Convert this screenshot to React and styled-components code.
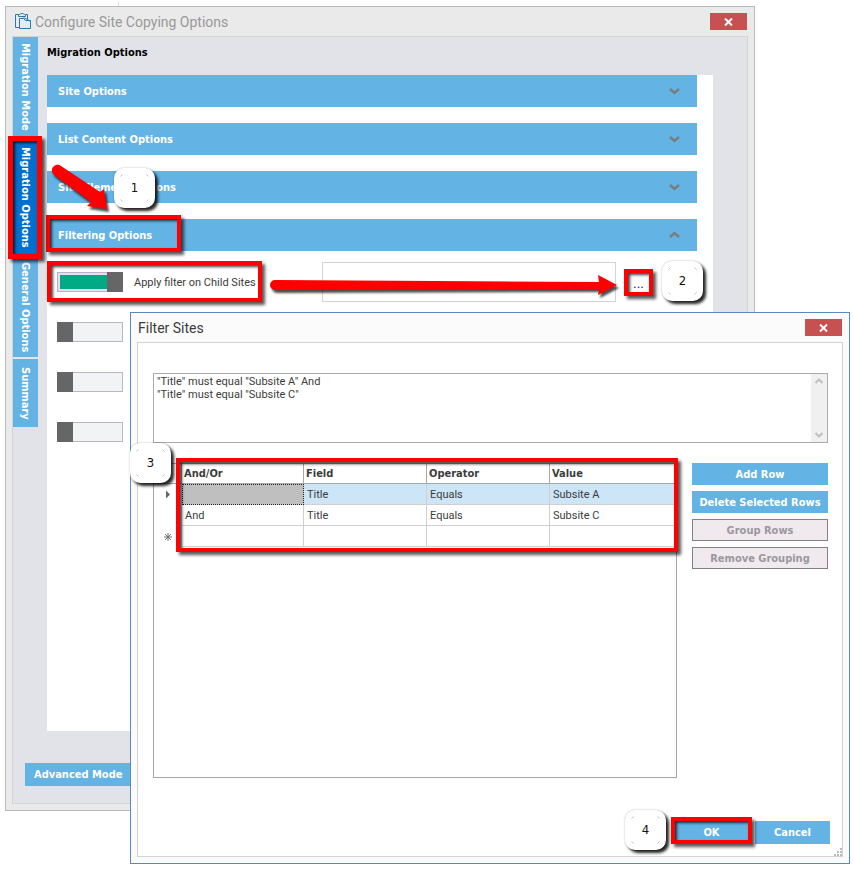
import React from "react";
import styled, { createGlobalStyle, css } from "styled-components";

const colors = {
  blue: "#63b3e4",
  activeBlue: "#0070cf",
  red: "#fe0000",
  panel: "#e2e3e9",
  line: "#d2d3d5",
  ink: "#3c3c3c",
};

const GlobalStyle = createGlobalStyle`
  *, *::before, *::after { box-sizing: border-box; }
  body {
    margin: 0;
    background: #fff;
    color: ${colors.ink};
    font: 11px/13px Roboto, "Liberation Sans", sans-serif;
  }
  button, input, textarea { font: inherit; color: inherit; margin: 0; }
`;

const boldText = css`
  font: 700 11px/13px "DejaVu Sans Condensed", "DejaVu Sans", sans-serif;
`;

const Desktop = styled.div`
  position: relative;
  padding: 6px 99px 58px 5px;

  &::before {
    content: "";
    position: absolute;
    left: 118px;
    top: 2px;
    width: 1px;
    height: 4px;
    background: #dedede;
  }
`;

const Window = styled.section`
  padding: 0 6px 6px;
  border: 1px solid #bababa;
  background: #eaeaea;
`;

const Dialog = styled(Window).attrs({ role: "dialog" })`
  position: absolute;
  z-index: 5;
  top: 312px;
  left: 130px;
  right: 4px;
  border-color: #5b87c5;
  background: #fbfbfb;
`;

const TitleBar = styled.header`
  display: flex;
  align-items: center;
  gap: 4px;
  height: 29px;
  padding: 0 1px;
  color: ${(p) => (p.$inactive ? "#999" : colors.ink)};
`;

const TitleIcon = styled.svg`
  width: 16px;
  height: 17px;
  margin-left: 2px;
  flex: none;
`;

const Title = styled.h1`
  flex: 1;
  margin: 0;
  font-size: 14px;
  line-height: 18px;
  font-weight: 400;
`;

const CloseButton = styled.button`
  display: flex;
  align-items: center;
  justify-content: center;
  width: 37px;
  height: 17px;
  padding: 0;
  border: 0;
  background: #c75050;
`;

const OptionsPanel = styled.div`
  border: 1px solid ${colors.line};
  background: ${colors.panel};
`;

const OptionsMain = styled.div`
  display: grid;
  grid-template-columns: 25px 1fr;
  column-gap: 9px;
  padding-right: 34px;
`;

const TabList = styled.nav`
  display: flex;
  flex-direction: column;
`;

const Tab = styled.button`
  ${boldText}
  position: relative;
  height: ${(p) => p.$height}px;
  margin-top: ${(p) => (p.$spaced ? 2 : 0)}px;
  padding: 0;
  border: 0;
  background: ${(p) => (p.$active ? colors.activeBlue : colors.blue)};
  color: #fff;
  writing-mode: vertical-rl;
  text-align: center;
  white-space: nowrap;
  z-index: ${(p) => (p.$active ? 1 : 0)};
`;

const Heading = styled.h2`
  ${boldText}
  margin: 0;
  padding: 9px 0 16px;
  color: #000;
`;

const OptionsBody = styled.div`
  position: relative;
  min-height: 656px;
  padding-right: 16px;
  background: #fff;
`;

const Sections = styled.div`
  display: grid;
  gap: 16px;
  margin-bottom: 6px;
`;

const SectionItem = styled.div`
  position: relative;
`;

const SectionBar = styled.button`
  ${boldText}
  display: flex;
  align-items: center;
  justify-content: space-between;
  width: 100%;
  height: 32px;
  padding: 0 17px 0 11px;
  border: 0;
  background: ${colors.blue};
  color: #fff;
`;

const FilterRow = styled.div`
  position: relative;
  display: grid;
  grid-template-columns: 265px 1fr 29px;
  column-gap: 0;
  align-items: center;
  height: 50px;
  padding: 0 44px 0 10px;
`;

const ToggleLabel = styled.label`
  display: flex;
  align-items: center;
  gap: 11px;
`;

const Toggle = styled.input.attrs({ type: "checkbox" })`
  appearance: none;
  width: 66px;
  height: 20px;
  border: 1px solid #b8b8c4;
  background: #f2f3f5;
  position: relative;

  &::before {
    content: "";
    position: absolute;
    top: -1px;
    left: -1px;
    width: 16px;
    height: 20px;
    background: #666;
  }

  &:checked {
    border-color: #b9b2c8;
    background: linear-gradient(#00aa84, #00aa84) 2px 2px / 60px 14px no-repeat #e8def0;
  }

  &:checked::before {
    left: auto;
    right: -1px;
  }
`;

const FilterField = styled.div`
  display: flex;
  padding-right: 8px;
`;

const FilterText = styled.input`
  flex: 1;
  min-width: 0;
  height: 40px;
  padding: 0 6px;
  border: 1px solid ${colors.line};
  background: #fff;
`;

const BrowseCell = styled.div`
  position: relative;
`;

const BrowseButton = styled.button`
  display: block;
  width: 100%;
  height: 27px;
  padding: 2px 0 0;
  border: 0;
  background: #fff;
  color: #203080;
  font-size: 14px;
`;

const ActionButton = styled.button`
  ${boldText}
  height: 23px;
  min-width: 75px;
  padding: 0 9px;
  border: 0;
  background: ${colors.blue};
  color: #fff;
  white-space: nowrap;

  &:disabled {
    border: 1px solid #858085;
    background: #f0eaef;
    color: #9a989c;
  }
`;

const PanelFooter = styled.div`
  padding: 32px 12px 17px;
  display: flex;
`;

const DialogPanel = styled.div`
  position: relative;
  padding: 30px 14px 12px 15px;
  border: 1px solid ${colors.line};
  background: #fff;
`;

const ConditionBox = styled.div`
  display: flex;
  height: 70px;
  border: 1px solid #ababab;
`;

const ConditionText = styled.textarea`
  flex: 1;
  min-width: 0;
  padding: 1px 3px;
  border: 0;
  resize: none;
  overflow: hidden;
  background: #fff;
`;

const ScrollTrack = styled.div`
  display: flex;
  flex-direction: column;
  justify-content: space-between;
  align-items: center;
  width: 16px;
  padding: 3px 0;
  background: #f0f0f0;
`;

const RuleArea = styled.div`
  display: grid;
  grid-template-columns: 1fr 136px;
  gap: 15px;
  align-items: start;
  margin-top: 20px;
`;

const RuleGrid = styled.div`
  position: relative;
  min-height: 315px;
  border: 1px solid #a5a5a5;
`;

const RuleTable = styled.table`
  width: 100%;
  table-layout: fixed;
  border-collapse: separate;
  border-spacing: 0;
`;

const Col = styled.col`
  width: ${(p) => p.$width};
`;

const HeadCell = styled.th`
  ${boldText}
  height: 20px;
  padding: 0 3px 0 2px;
  border-right: 1px solid #a8a8a8;
  border-bottom: 1px solid #a8a8a8;
  text-align: left;
`;

const RuleRow = styled.tr`
  background: ${(p) => (p.$selected ? "#cce5f7" : "#fff")};
`;

const Cell = styled.td`
  height: 21px;
  padding: 0 3px;
  border-right: 1px solid #cfcfcf;
  border-bottom: 1px solid #cfcfcf;
  ${(p) =>
    p.$focused &&
    css`
      background: #bfbfbf;
      outline: 1px dotted #222;
      outline-offset: -1px;
    `}
`;

const MarkerCell = styled.td`
  padding: 0 0 0 10px;
  background: #fff;
  border-right: 1px solid #cfcfcf;

  svg {
    display: block;
  }
`;

const SideActions = styled.div`
  display: grid;
  gap: 6px;

  ${ActionButton} {
    height: 22px;
    padding: 0;
  }
`;

const DialogFooter = styled.footer`
  display: flex;
  justify-content: flex-end;
  gap: 6px;
  margin: 43px -2px 0 0;
`;

const ConfirmCell = styled.div`
  position: relative;
  display: flex;
`;

const ResizeGrip = styled.svg`
  position: absolute;
  right: 0;
  bottom: 0;
  width: 8px;
  height: 8px;
`;

const Highlight = styled.span`
  position: absolute;
  inset: ${(p) => p.$inset};
  width: ${(p) => p.$width || "auto"};
  height: ${(p) => p.$height || "auto"};
  border: ${(p) => p.$thickness || 4}px solid ${colors.red};
  box-shadow: 3px 3px 3px rgba(0, 0, 0, 0.65), inset 2px 2px 3px rgba(0, 0, 0, 0.75);
  pointer-events: none;
`;

const Badge = styled.span`
  position: absolute;
  inset: ${(p) => p.$inset};
  z-index: 2;
  display: flex;
  align-items: center;
  justify-content: center;
  width: 41px;
  height: 40px;
  border-radius: 10px;
  background: #fff;
  box-shadow: 3px 3px 3px rgba(0, 0, 0, 0.85), 0 0 2px rgba(0, 0, 0, 0.3);
  color: #111;
  font: 13px/16px "DejaVu Sans Condensed", "DejaVu Sans", sans-serif;
`;

const BadgeCorners = styled.svg`
  position: absolute;
  left: 6px;
  top: 6px;
  width: 29px;
  height: 28px;
`;

const Arrow = styled.svg`
  position: absolute;
  inset: ${(p) => p.$inset};
  z-index: 1;
  overflow: visible;
  fill: ${colors.red};
  filter: drop-shadow(2px 3px 1px rgba(0, 0, 0, 0.7));
  pointer-events: none;
`;

function Callout({ inset, children }) {
  return (
    <Badge $inset={inset}>
      <BadgeCorners viewBox="0 0 29 28" fill="none" stroke="#c0c0c0" aria-hidden="true">
        <path d="M.5 2.500L2.500 .5M26.500 .5L28.500 2.500M28.500 25.500L26.500 27.500M2.500 27.500L.5 25.500" />
      </BadgeCorners>
      {children}
    </Badge>
  );
}

function Chevron({ up, color = "#7b7b80" }) {
  return (
    <svg width="11" height="8" viewBox="0 0 11 8" fill="none" stroke={color} strokeWidth="2.4" aria-hidden="true">
      <path d={up ? "M1 6L5.500 2L10 6" : "M1 2L5.500 6L10 2"} />
    </svg>
  );
}

function ScrollChevron({ up }) {
  return (
    <svg width="8" height="8" viewBox="0 0 8 8" fill="none" stroke="#c0c0c0" strokeWidth="2" aria-hidden="true">
      <path d={up ? "M.5 6L4 2.500L7.500 6" : "M.5 2L4 5.500L7.500 2"} />
    </svg>
  );
}

function Close() {
  return (
    <CloseButton aria-label="Close">
      <svg width="9" height="8" viewBox="0 0 9 8" stroke="#fff" strokeWidth="2" aria-hidden="true">
        <path d="M1 .5L8 7.500M8 .5L1 7.500" />
      </svg>
    </CloseButton>
  );
}

const markers = {
  current: (
    <svg width="8" height="9" viewBox="0 0 8 9" aria-hidden="true">
      <path d="M2 0.500L6 4.500L2 8.500Z" fill="#666" />
    </svg>
  ),
  fresh: (
    <svg width="8" height="8" viewBox="0 0 8 8" stroke="#666" aria-hidden="true">
      <path d="M4 0V8M0 4H8M1 1L7 7M7 1L1 7" strokeWidth=".9" />
    </svg>
  ),
};

const sections = ["Site Options", "List Content Options", "Site Element Options", "Filtering Options"];
const rules = [
  { marker: "current", cells: ["", "Title", "Equals", "Subsite A"] },
  { marker: null, cells: ["And", "Title", "Equals", "Subsite C"] },
  { marker: "fresh", cells: ["", "", "", ""] },
];

function FilterDialog() {
  return (
    <Dialog aria-label="Filter Sites">
      <TitleBar>
        <Title as="h2">Filter Sites</Title>
        <Close />
      </TitleBar>
      <DialogPanel>
        <ConditionBox>
          <ConditionText
            aria-label="Filter condition"
            readOnly
            value={'"Title" must equal "Subsite A" And\n"Title" must equal "Subsite C"'}
          />
          <ScrollTrack>
            <ScrollChevron up />
            <ScrollChevron />
          </ScrollTrack>
        </ConditionBox>
        <RuleArea>
          <RuleGrid>
            <RuleTable>
              <colgroup>
                <Col $width="28px" />
                <Col $width="122px" />
                <Col $width="123px" />
                <Col $width="123px" />
                <Col $width="auto" />
              </colgroup>
              <thead>
                <tr>
                  <HeadCell aria-label="Row state" />
                  {["And/Or", "Field", "Operator", "Value"].map((name) => (
                    <HeadCell key={name} scope="col">{name}</HeadCell>
                  ))}
                </tr>
              </thead>
              <tbody>
                {rules.map((rule, r) => (
                  <RuleRow key={r} $selected={r === 0}>
                    <MarkerCell>{markers[rule.marker]}</MarkerCell>
                    {rule.cells.map((text, c) => (
                      <Cell key={c} $focused={r === 0 && c === 0}>{text}</Cell>
                    ))}
                  </RuleRow>
                ))}
              </tbody>
            </RuleTable>
            <Highlight $inset="-6px -2px auto 22px" $height="94px" />
            <Callout inset="-21px auto auto -24px">3</Callout>
          </RuleGrid>
          <SideActions>
            <ActionButton>Add Row</ActionButton>
            <ActionButton>Delete Selected Rows</ActionButton>
            <ActionButton disabled>Group Rows</ActionButton>
            <ActionButton disabled>Remove Grouping</ActionButton>
          </SideActions>
        </RuleArea>
        <DialogFooter>
          <ConfirmCell>
            <ActionButton>OK</ActionButton>
            <Highlight $inset="-4px -3px 0 -3px" />
            <Callout inset="-11px auto auto -49px">4</Callout>
          </ConfirmCell>
          <ActionButton>Cancel</ActionButton>
        </DialogFooter>
        <ResizeGrip viewBox="0 0 8 8" fill="#bbb" aria-hidden="true">
          <path d="M6 0h2v2h-2zM3 3h2v2h-2zM6 3h2v2h-2zM0 6h2v2h-2zM3 6h2v2h-2zM6 6h2v2h-2z" />
        </ResizeGrip>
      </DialogPanel>
    </Dialog>
  );
}

export default function App() {
  return (
    <Desktop>
      <GlobalStyle />
      <Window>
        <TitleBar $inactive>
          <TitleIcon viewBox="0 0 16 17" fill="none" stroke="#2e78a8" aria-hidden="true">
            <path d="M4.500 14.500H.5V1.500H3.500M3.500 3.500V1.500H4.500Q5.500 .5 7 .5Q8.500 .5 9.500 1.500H10.500V3.500Z" />
            <path d="M10.500 1.500H12.500V6.500M4.500 15.500V5.500H8.500L10.500 7.500H15.500V15.500Z" fill="#eaeaea" />
            <path d="M8.500 4.500L12.500 6.500L15.500 8.500" />
          </TitleIcon>
          <Title>Configure Site Copying Options</Title>
          <Close />
        </TitleBar>
        <OptionsPanel>
          <OptionsMain>
            <TabList aria-label="Option pages">
              <Tab $height={100}>Migration Mode</Tab>
              <Tab $height={120} $active>
                Migration Options
                <Highlight $inset="-1px -4px -2px -5px" $thickness={5} />
              </Tab>
              <Tab $height={100}>General Options</Tab>
              <Tab $height={68} $spaced>Summary</Tab>
            </TabList>
            <div>
              <Heading>Migration Options</Heading>
              <OptionsBody>
                <Sections>
                  {sections.map((name) => {
                    const open = name === "Filtering Options";
                    return (
                      <SectionItem key={name}>
                        <SectionBar aria-expanded={open}>
                          {name}
                          <Chevron up={open} />
                        </SectionBar>
                        {open && <Highlight $inset="-4px auto -1px -1px" $width="135px" />}
                      </SectionItem>
                    );
                  })}
                </Sections>
                <FilterRow>
                  <ToggleLabel>
                    <Toggle defaultChecked />
                    Apply filter on Child Sites
                  </ToggleLabel>
                  <FilterField>
                    <FilterText aria-label="Child sites filter" readOnly />
                  </FilterField>
                  <BrowseCell>
                    <BrowseButton aria-label="Edit child sites filter">...</BrowseButton>
                    <Highlight $inset="0" />
                  </BrowseCell>
                  <Highlight $inset="4px auto 5px 0" $width="215px" />
                  <Arrow $inset="17px auto auto 222px" width="348" height="22" viewBox="0 0 348 22" aria-hidden="true">
                    <path d="M6 6L330 8L329 1L348 11L329 21L330 15L6 16A5 5 0 0 1 6 6Z" />
                  </Arrow>
                  <Callout inset="4px -6px auto auto">2</Callout>
                </FilterRow>
                <FilterRow><Toggle aria-label="Second filter" /></FilterRow>
                <FilterRow><Toggle aria-label="Third filter" /></FilterRow>
                <FilterRow><Toggle aria-label="Fourth filter" /></FilterRow>
                <Arrow $inset="85px auto auto 0" width="70" height="55" viewBox="0 0 70 55" aria-hidden="true">
                  <path d="M14 6L53 32L57 29L60 49L40 46L44 42L7 15A5.500 5.500 0 0 1 14 6Z" />
                </Arrow>
                <Callout inset="93px auto auto 67px">1</Callout>
              </OptionsBody>
            </div>
          </OptionsMain>
          <PanelFooter>
            <ActionButton>Advanced Mode</ActionButton>
          </PanelFooter>
        </OptionsPanel>
      </Window>
      <FilterDialog />
    </Desktop>
  );
}
